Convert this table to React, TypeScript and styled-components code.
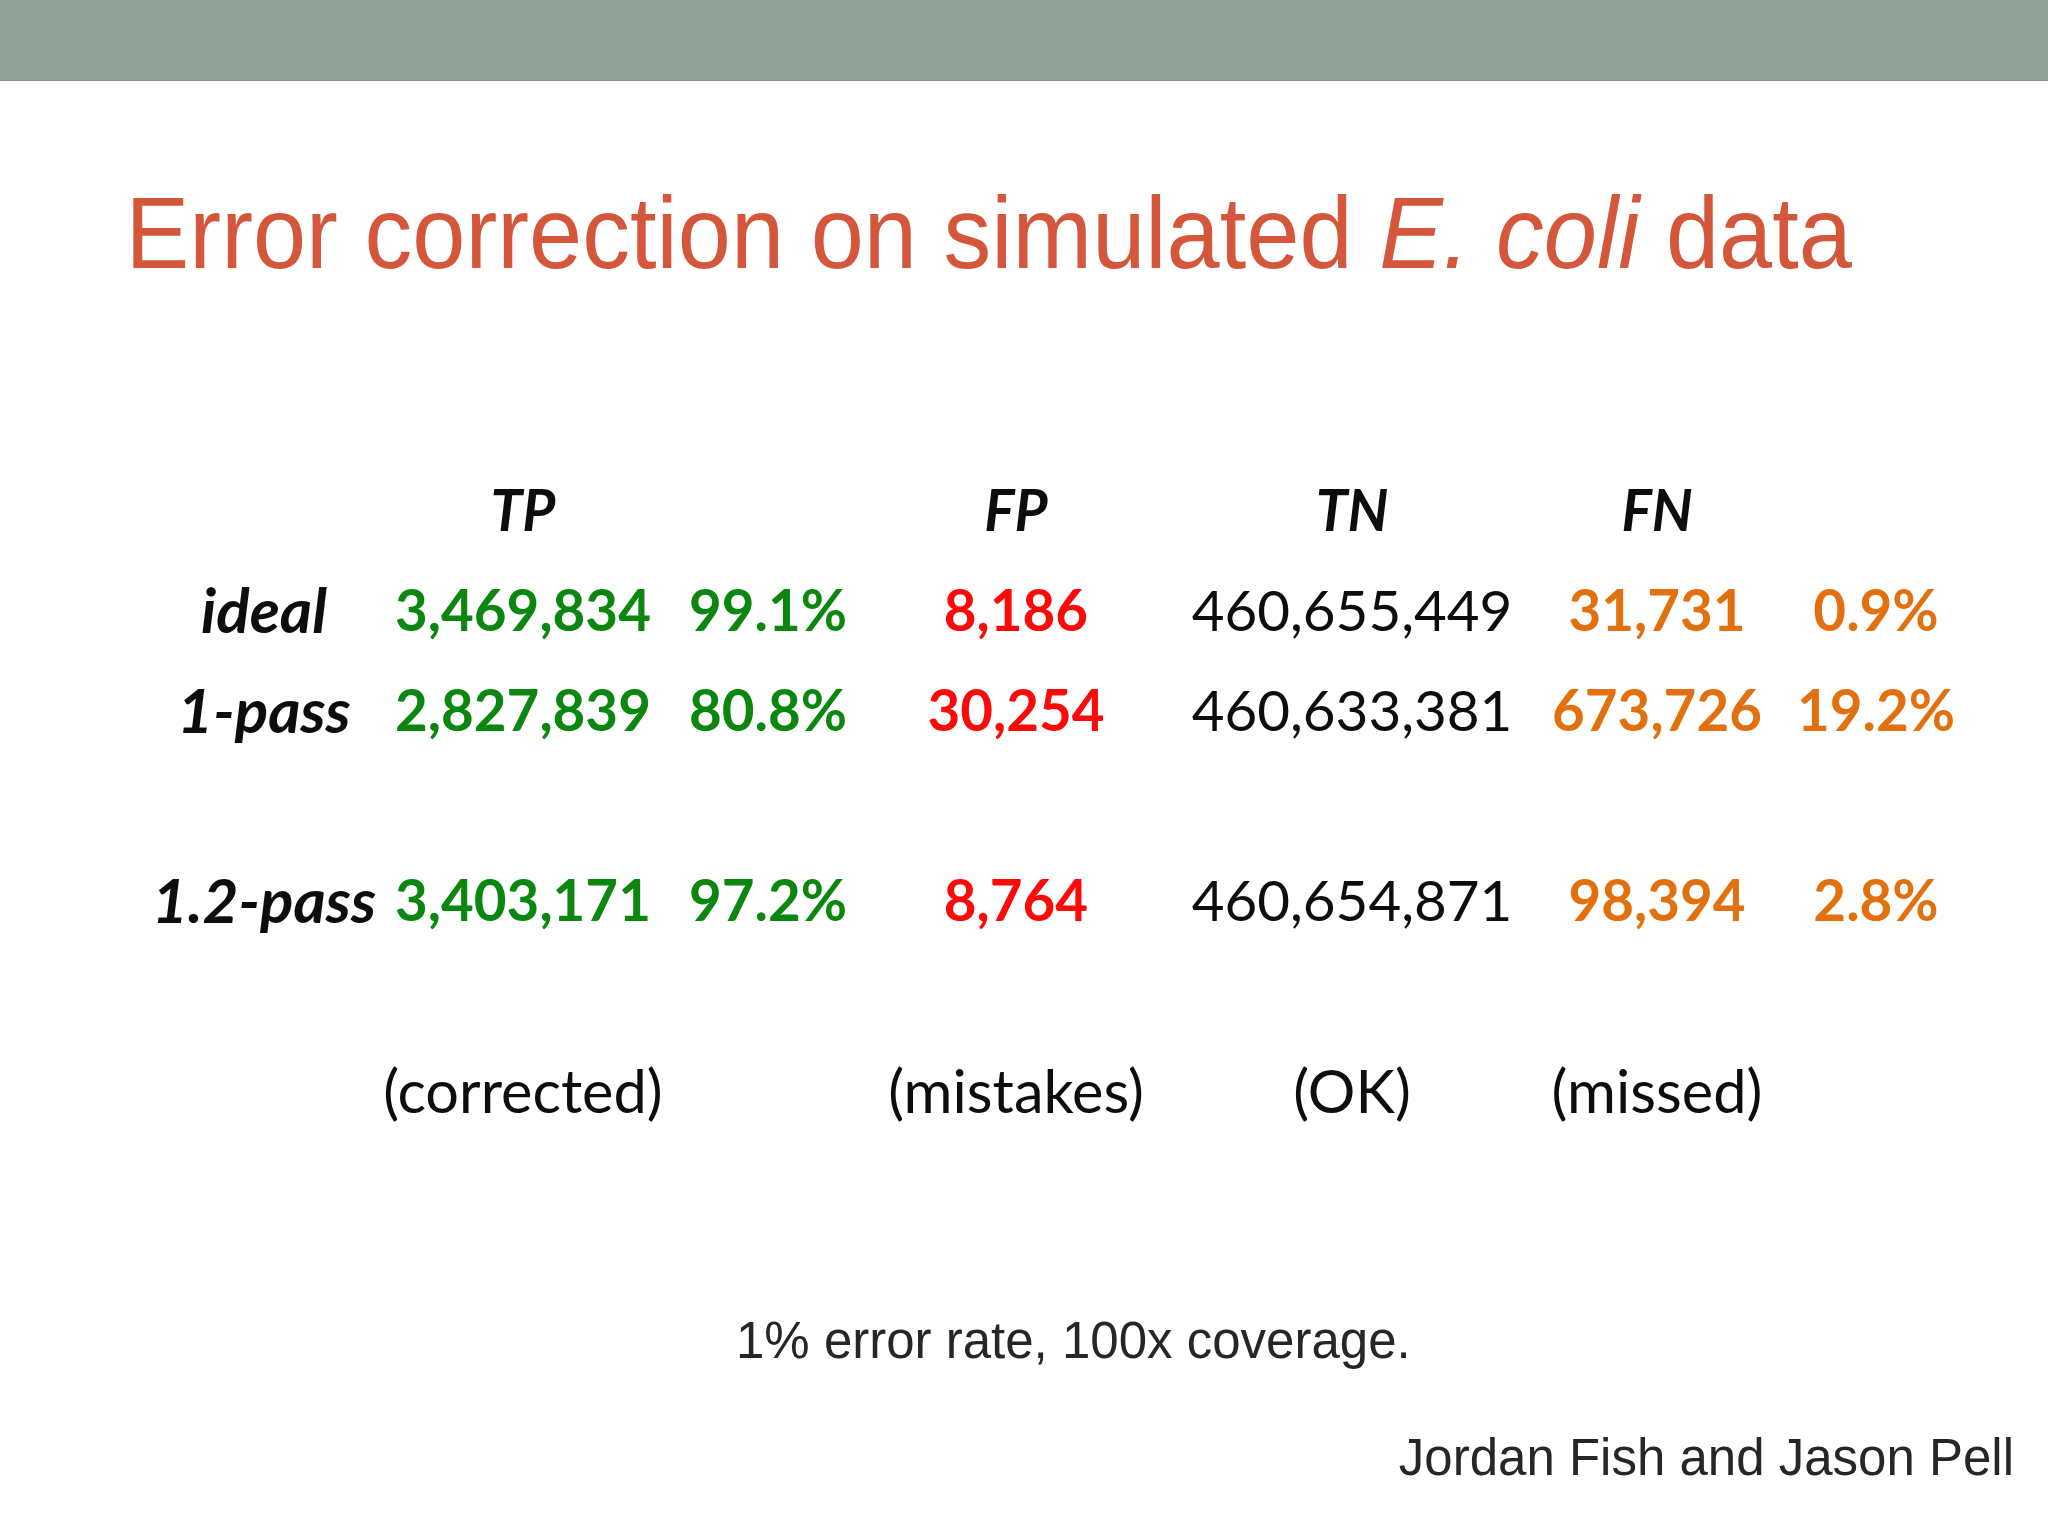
import React from "react";
import styled, { createGlobalStyle } from "styled-components";

const GlobalStyle = createGlobalStyle`
    html, body {
        margin: 0;
        padding: 0;
        background: #ffffff;
    }
`;

const Slide = styled.div`
    width: 2048px;
    height: 1536px;
    overflow: hidden;
    display: flex;
    flex-direction: column;
    background: #ffffff;
`;

const TopBar = styled.div`
    height: 80px;
    flex: none;
    background-color: #92a399;
    border-bottom: 1px solid #87978e;
`;

const Title = styled.h1`
    margin: 101px 0 0;
    padding-left: 134px;
    font-family: "Liberation Sans", Arial, sans-serif;
    font-weight: 400;
    font-size: 102px;
    line-height: 102px;
    color: #d4573c;
    white-space: nowrap;
    transform: scaleX(0.937);
    transform-origin: left center;
    em {
        font-style: italic;
    }
`;

const Table = styled.div`
    margin-top: 175px;
    display: flex;
    flex-direction: column;
`;

const Row = styled.div<{ $space?: number }>`
    display: grid;
    grid-template-columns: 268px 250px 240px 256px 416px 194px 244px;
    padding-left: 130px;
    margin-top: ${({ $space }) => $space ?? 0}px;
    height: 100px;
    line-height: 100px;
    font-family: Lato, "Noto Sans", sans-serif;
    font-size: 56.5px;
`;

type Tone = "label" | "green" | "red" | "black" | "orange" | "head" | "note";

const toneColor: Record<Tone, string> = {
    label: "#0d0d0d",
    head: "#0d0d0d",
    green: "#0b870f",
    red: "#fb0a0a",
    black: "#0d0d0d",
    orange: "#e3700f",
    note: "#0d0d0d",
};

const toneSize: Partial<Record<Tone, string>> = {
    label: "62px",
    head: "57px",
    note: "59.5px",
};

const Cell = styled.div<{ $tone: Tone }>`
    justify-self: unsafe center;
    white-space: nowrap;
    color: ${({ $tone }) => toneColor[$tone]};
    font-weight: ${({ $tone }) =>
        $tone === "black" || $tone === "note" ? 400 : 700};
    font-style: ${({ $tone }) =>
        $tone === "label" || $tone === "head" ? "italic" : "normal"};
    font-size: ${({ $tone }) => toneSize[$tone] ?? "inherit"};
`;

const Footnote = styled.div`
    margin-top: 175px;
    padding-left: 736px;
    font-family: "Liberation Sans", Arial, sans-serif;
    font-size: 51px;
    line-height: 51px;
    color: #262626;
`;

const Credit = styled.div`
    margin-top: 66px;
    padding-right: 34px;
    text-align: right;
    font-family: "Liberation Sans", Arial, sans-serif;
    font-size: 51px;
    line-height: 51px;
    color: #262626;
`;

type Result = {
    label: string;
    tp: string;
    tpPct: string;
    fp: string;
    tn: string;
    fn: string;
    fnPct: string;
    space: number;
};

const results: Result[] = [
    { label: "ideal", tp: "3,469,834", tpPct: "99.1%", fp: "8,186", tn: "460,655,449", fn: "31,731", fnPct: "0.9%", space: 0 },
    { label: "1-pass", tp: "2,827,839", tpPct: "80.8%", fp: "30,254", tn: "460,633,381", fn: "673,726", fnPct: "19.2%", space: 0 },
    { label: "1.2-pass", tp: "3,403,171", tpPct: "97.2%", fp: "8,764", tn: "460,654,871", fn: "98,394", fnPct: "2.8%", space: 90 },
];

export default function App() {
    return (
        <>
            <GlobalStyle />
            <Slide>
                <TopBar />
                <Title>
                    Error correction on simulated <em>E. coli</em> data
                </Title>
                <Table>
                    <Row>
                        <Cell $tone="head" />
                        <Cell $tone="head">TP</Cell>
                        <Cell $tone="head" />
                        <Cell $tone="head">FP</Cell>
                        <Cell $tone="head">TN</Cell>
                        <Cell $tone="head">FN</Cell>
                        <Cell $tone="head" />
                    </Row>
                    {results.map((r) => (
                        <Row key={r.label} $space={r.space}>
                            <Cell $tone="label">{r.label}</Cell>
                            <Cell $tone="green">{r.tp}</Cell>
                            <Cell $tone="green">{r.tpPct}</Cell>
                            <Cell $tone="red">{r.fp}</Cell>
                            <Cell $tone="black">{r.tn}</Cell>
                            <Cell $tone="orange">{r.fn}</Cell>
                            <Cell $tone="orange">{r.fnPct}</Cell>
                        </Row>
                    ))}
                    <Row $space={91}>
                        <Cell $tone="note" />
                        <Cell $tone="note">(corrected)</Cell>
                        <Cell $tone="note" />
                        <Cell $tone="note">(mistakes)</Cell>
                        <Cell $tone="note">(OK)</Cell>
                        <Cell $tone="note">(missed)</Cell>
                        <Cell $tone="note" />
                    </Row>
                </Table>
                <Footnote>1% error rate, 100x coverage.</Footnote>
                <Credit>Jordan Fish and Jason Pell</Credit>
            </Slide>
        </>
    );
}
